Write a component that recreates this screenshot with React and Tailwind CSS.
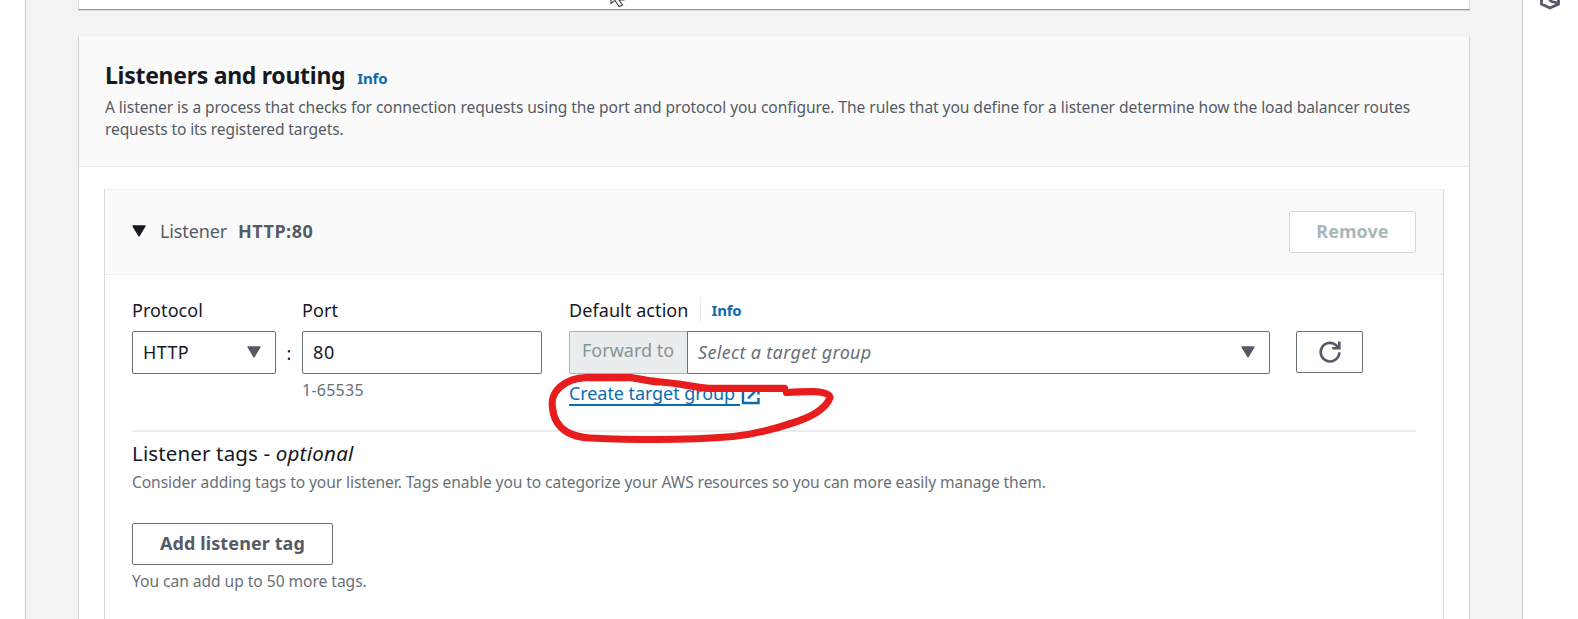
function Caret({ className }) {
  return (
    <svg viewBox="0 0 14 12" className={"-mt-0.5 h-3 w-3.5 shrink-0 " + className}>
      <path d="M1 1h12L7 11z" fill="currentColor" stroke="currentColor" strokeWidth="1.4" strokeLinejoin="round" />
    </svg>
  );
}

function Refresh() {
  return (
    <svg viewBox="0 0 24 24" className="h-6 w-6" fill="none" stroke="#545b64" strokeWidth="2.6">
      <path d="M21.300 12.300a9.300 9.300 0 1 1-3.200-7.100l2.400 2.300" />
      <path d="M21.300 1.500v6.800h-7" />
    </svg>
  );
}

function External() {
  return (
    <svg viewBox="0 0 20 20" className="mt-[3px] h-5 w-5" fill="none" stroke="#0b6cb0" strokeWidth="2.4">
      <path d="M7.500 3H3v15h15.500V13" />
      <path d="M8 13.500L17.500 4M12 2.500h6.500v7" />
    </svg>
  );
}

function Marker() {
  return (
    <svg
      viewBox="0 0 300 80"
      className="pointer-events-none absolute left-[-26px] top-[-13px] z-10 h-[80px] w-[300px]"
      fill="none"
      stroke="#e71d1d"
      strokeWidth="7.2"
      strokeLinecap="round"
      strokeLinejoin="round"
    >
      <path d="M241.500 19.300H165C150 18 134 14 118 13C106 12.500 97 9.500 87 8.700H43C31 9 24 12 17 18C9 25 8.500 32 9.500 39C10.500 49 14 57 24 63C32 67.500 38 68.500 47 69C93 71 150 71 190 67.500C215 65 235 59 254 52.500C264 49 271 46 277 41C282 37 286 32 287 28.500C286 24.500 280 23 270 22.700C261 22.500 252 23 243.500 23.500" />
    </svg>
  );
}

export default function App() {
  return (
    <div className="relative flex h-[619px] w-[1578px] overflow-hidden bg-white font-['Noto_Sans','Open_Sans',sans-serif] text-lg text-[#16191f]">
      <div className="w-[26px] shrink-0 border-r border-[#c9c9c5]" />
      <main className="w-[1496px] shrink-0 bg-[#f2f3f3] px-[52px]">
        <section className="h-[10px] border-x border-b border-x-[#d5d9d9] border-b-[#8f9898] bg-white shadow-[0_1px_0_#d5d9d9]" />
        <section className="mt-[26px] h-[600px] border-x border-t border-x-[#d0d3d3] border-t-[#f5f5f5] bg-white">
          <header className="h-[130px] border-b border-[#eaeded] bg-[#fafafa] pl-[26px] pt-[23px]">
            <div className="flex h-[30px] items-baseline">
              <h2 className="text-[23px] font-bold leading-[30px] tracking-[-0.28px]">Listeners and routing</h2>
              <a className="ml-3 text-[15px] font-bold tracking-[-0.2px] text-[#0b6cb0]">Info</a>
            </div>
            <p className="mt-[7px] whitespace-nowrap text-[15.6px] leading-[21.5px] tracking-[-0.074px] text-[#545b64]">
              A listener is a process that checks for connection requests using the port and protocol you configure. The rules that you define for a listener determine how the load balancer routes
              <br />
              <span className="tracking-[-0.13px]">requests to its registered targets.</span>
            </p>
          </header>

          <div className="mx-[25px] mt-[22px] h-[500px] border border-[#d5dbdb] border-t-[#eeeeee] bg-white">
            <div className="flex h-[85px] items-center border-b border-[#eaeded] bg-[#fafafa] px-[27px] text-[#545b64]">
              <Caret className="text-[#16191f]" />
              <span className="-mt-0.5 ml-3.5 tracking-[-0.13px]">Listener</span>
              <span className="-mt-0.5 ml-[11px] font-bold tracking-[0.5px]">HTTP:80</span>
              <button className="ml-auto flex h-[42px] w-[127px] items-center justify-center rounded-[2px] border border-[#d5dbdb] bg-white pb-0.5 font-bold tracking-[0.05px] text-[#aab7b8]">
                Remove
              </button>
            </div>

            <div className="mx-[27px]">
              <div className="flex h-[155px] pt-[23px]">
                <div className="w-[144px]">
                  <div className="leading-6 tracking-[0.07px]">Protocol</div>
                  <div className="mt-[9px] flex h-[43px] items-center justify-between rounded-[2px] border border-[#687078] pl-[10px] pr-[14px]">
                    <span className="-mt-0.5 tracking-[0.35px]">HTTP</span>
                    <Caret className="text-[#545b64]" />
                  </div>
                </div>
                <div className="w-[26px] pt-[43px] text-center leading-6">:</div>
                <div className="w-[240px]">
                  <div className="leading-6 tracking-[0.07px]">Port</div>
                  <div className="mt-[9px] flex h-[43px] items-center rounded-[2px] border border-[#687078] pb-0.5 pl-[10px] tracking-[0.6px]">80</div>
                  <div className="mt-[5px] text-base leading-[22px] tracking-[0.25px] text-[#687078]">1-65535</div>
                </div>
                <div className="ml-[27px] w-[701px]">
                  <div className="flex h-6 items-center">
                    <span className="tracking-[0.08px]">Default action</span>
                    <span className="ml-[11px] h-6 w-px bg-[#eaeded]" />
                    <a className="ml-[11px] mt-0.5 text-[15px] font-bold tracking-[-0.2px] text-[#0b6cb0]">Info</a>
                  </div>
                  <div className="mt-[9px] flex h-[43px]">
                    <div className="flex w-[118px] items-center rounded-l-[2px] border border-r-0 border-[#aab7b8] bg-[#eaeded] pb-[5px] pl-3 text-[#879596]">Forward to</div>
                    <div className="flex w-[583px] items-center justify-between rounded-r-[2px] border border-[#687078] pl-[10px] pr-[14px]">
                      <span className="-mt-0.5 italic tracking-[0.32px] text-[#687078]">Select a target group</span>
                      <Caret className="text-[#545b64]" />
                    </div>
                  </div>
                  <div className="relative mt-2 flex h-6">
                    <a className="h-6 w-[171px] whitespace-nowrap border-b-2 border-[#0b6cb0] leading-[23px] tracking-[-0.08px] text-[#0b6cb0]">Create target group</a>
                    <External />
                    <Marker />
                  </div>
                </div>
                <button className="ml-[26px] mt-[33px] flex h-[42px] w-[67px] items-center justify-center rounded-[2px] border border-[#687078]">
                  <Refresh />
                </button>
              </div>

              <div className="h-[2px] bg-[#eaeded]" />
              <h3 className="mt-2 text-[20.5px] leading-[26px] tracking-[0.14px]">
                Listener tags - <i className="tracking-[0.27px]">optional</i>
              </h3>
              <p className="mt-[5px] text-[15.6px] leading-[22px] tracking-[-0.09px] text-[#687078]">
                Consider adding tags to your listener. Tags enable you to categorize your AWS resources so you can more easily manage them.
              </p>
              <button className="mt-[30px] flex h-[42px] w-[201px] items-center justify-center rounded-[2px] border border-[#687078] pb-[3px] font-bold tracking-[0.1px] text-[#545b64]">
                Add listener tag
              </button>
              <p className="mt-[5px] text-[15.6px] leading-[22px] tracking-[-0.04px] text-[#687078]">You can add up to 50 more tags.</p>
            </div>
          </div>
        </section>
      </main>
      <aside className="flex flex-1 justify-center border-l border-[#c9cccc] pr-0.5">
        <svg viewBox="0 0 20 10" className="h-2.5 w-5" fill="none" stroke="#545b64" strokeWidth="2.8">
          <path d="M1.500 -2v6L10 8 18.500 4v-6M9 -1l2.500 2.500 6.500 1.500" />
        </svg>
      </aside>
      <svg viewBox="0 0 16 8" className="absolute left-[610px] top-0 h-2 w-4" fill="white" stroke="#444" strokeWidth="1.1">
        <path d="M1 -7.500V3.500L5 .5l4 6 3.500-1.500L9 0h4z" />
      </svg>
    </div>
  );
}
